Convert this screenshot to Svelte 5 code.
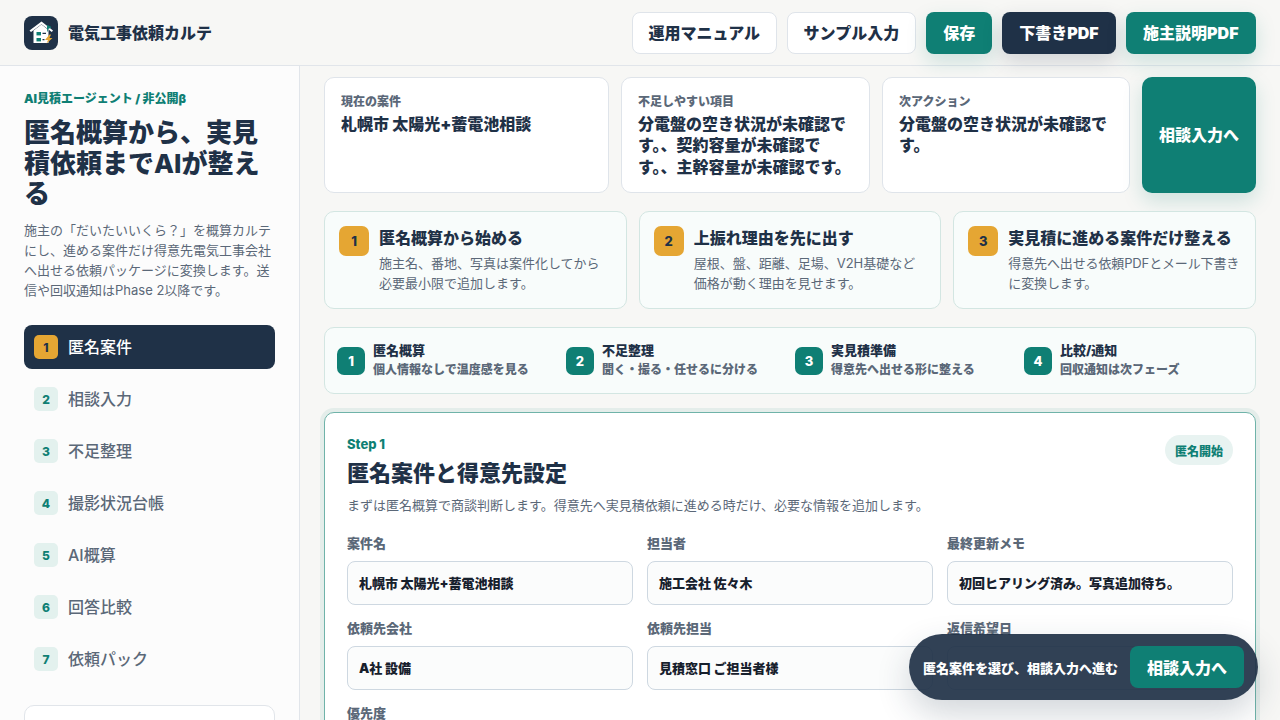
<script>
	const actions = [
		{ label: '運用マニュアル', kind: 'ghost' },
		{ label: 'サンプル入力', kind: 'ghost' },
		{ label: '保存', kind: 'teal' },
		{ label: '下書きPDF', kind: 'navy' },
		{ label: '施主説明PDF', kind: 'teal' }
	];
	const nav = ['匿名案件', '相談入力', '不足整理', '撮影状況台帳', 'AI概算', '回答比較', '依頼パック'];
	const summary = [
		{ label: '現在の案件', value: '札幌市 太陽光+蓄電池相談' },
		{ label: '不足しやすい項目', value: '分電盤の空き状況が未確認です。、契約容量が未確認です。、主幹容量が未確認です。' },
		{ label: '次アクション', value: '分電盤の空き状況が未確認です。' }
	];
	const guide = [
		{ title: '匿名概算から始める', text: '施主名、番地、写真は案件化してから必要最小限で追加します。' },
		{ title: '上振れ理由を先に出す', text: '屋根、盤、距離、足場、V2H基礎など価格が動く理由を見せます。' },
		{ title: '実見積に進める案件だけ整える', text: '得意先へ出せる依頼PDFとメール下書きに変換します。' }
	];
	const flow = [
		{ title: '匿名概算', text: '個人情報なしで温度感を見る' },
		{ title: '不足整理', text: '聞く・撮る・任せるに分ける' },
		{ title: '実見積準備', text: '得意先へ出せる形に整える' },
		{ title: '比較/通知', text: '回収通知は次フェーズ' }
	];
	const fields = [
		{ label: '案件名', value: '札幌市 太陽光+蓄電池相談' },
		{ label: '担当者', value: '施工会社 佐々木' },
		{ label: '最終更新メモ', value: '初回ヒアリング済み。写真追加待ち。' },
		{ label: '依頼先会社', value: 'A社 設備' },
		{ label: '依頼先担当', value: '見積窓口 ご担当者様' },
		{ label: '返信希望日', value: '' },
		{ label: '優先度', value: '通常' }
	];
</script>

<div class="app">
	<header class="topbar">
		<div class="brand">
			<svg class="logo" viewBox="0 0 34 34" aria-hidden="true">
				<rect width="34" height="34" rx="8" fill="#1f3147" />
				<path d="M17.5 5.5 29 14.6 27.8 16 17.5 8.2 7 16 5.5 14.6Z" fill="#fff" />
				<path d="M9.5 14.5 17.5 8.6 24.5 14V27H9.5Z" fill="#fff" />
				<rect x="12.5" y="16" width="4.5" height="3.4" fill="#0f7f74" />
				<rect x="12.5" y="22" width="4.5" height="3.4" fill="#0f7f74" />
				<path d="M18.5 17.4h3.5M18.5 23.6h2" stroke="#1f3147" stroke-width="1.2" />
				<path d="M23.5 9.5v6M23.5 9.5l3.5 1.7-3.5 1.7Z" fill="#0f7f74" stroke="#0f7f74" stroke-width=".8" />
				<path d="M25.5 18.5 21 24h3l-1.5 3.5 6-5.5h-3l1.5-3.5Z" fill="#e5a633" />
			</svg>
			<span class="brand-name">電気工事依頼カルテ</span>
		</div>
		<div class="actions">
			{#each actions as a}
				<button class="btn {a.kind}">{a.label}</button>
			{/each}
		</div>
	</header>

	<div class="body">
		<aside class="sidebar">
			<p class="eyebrow">AI見積エージェント / 非公開β</p>
			<h1>匿名概算から、実見積依頼までAIが整える</h1>
			<p class="lead">施主の「だいたいいくら？」を概算カルテにし、進める案件だけ得意先電気工事会社へ出せる依頼パッケージに変換します。送信や回収通知はPhase 2以降です。</p>
			<nav class="nav">
				{#each nav as item, i}
					<div class="nav-item" class:active={i === 0}>
						<span class="nav-num">{i + 1}</span>
						<span class="nav-label">{item}</span>
					</div>
				{/each}
			</nav>
			<div class="side-card"></div>
		</aside>

		<main class="main">
			<section class="summary">
				{#each summary as s}
					<div class="summary-card">
						<div class="summary-label">{s.label}</div>
						<div class="summary-value">{s.value}</div>
					</div>
				{/each}
				<button class="summary-next">相談入力へ</button>
			</section>

			<section class="guide">
				{#each guide as g, i}
					<div class="guide-card">
						<span class="guide-num">{i + 1}</span>
						<div>
							<h3>{g.title}</h3>
							<p>{g.text}</p>
						</div>
					</div>
				{/each}
			</section>

			<section class="flow">
				{#each flow as f, i}
					<div class="flow-item">
						<span class="flow-num">{i + 1}</span>
						<div>
							<div class="flow-title">{f.title}</div>
							<div class="flow-text">{f.text}</div>
						</div>
					</div>
				{/each}
			</section>

			<section class="panel">
				<div class="panel-head">
					<div>
						<div class="step">Step 1</div>
						<h2>匿名案件と得意先設定</h2>
						<p class="panel-desc">まずは匿名概算で商談判断します。得意先へ実見積依頼に進める時だけ、必要な情報を追加します。</p>
					</div>
					<span class="pill">匿名開始</span>
				</div>
				<div class="fields">
					{#each fields as f}
						<div class="field">
							<div class="field-label">{f.label}</div>
							<div class="input">{f.value}</div>
						</div>
					{/each}
				</div>
			</section>
		</main>
	</div>

	<div class="floatbar">
		<span>匿名案件を選び、相談入力へ進む</span>
		<button>相談入力へ</button>
	</div>
</div>

<style>
	:global(body) {
		margin: 0;
		font-family: Inter, "Noto Sans CJK JP", sans-serif;
		color: #1f3147;
		background: #f7f7f5;
	}
	.app {
		height: 720px;
		overflow: hidden;
		position: relative;
	}
	p, h1, h2, h3 { margin: 0; }
	button { font-family: inherit; }

	/* header */
	.topbar {
		height: 66px;
		box-sizing: border-box;
		border-bottom: 1px solid #e1e5ea;
		padding: 0 24px;
		display: flex;
		align-items: center;
		justify-content: space-between;
		background: #f7f7f5;
	}
	.brand { display: flex; align-items: center; gap: 10px; }
	.logo { width: 34px; height: 34px; display: block; }
	.brand-name { font-size: 16px; font-weight: 900; padding-bottom: 2px; }
	.actions { display: flex; gap: 10px; }
	.btn {
		height: 42px;
		padding: 0 16px 2px;
		border-radius: 8px;
		border: 1px solid transparent;
		font-size: 16px;
		font-weight: 900;
		white-space: nowrap;
	}
	.btn:first-child { padding: 0 15.5px 2px; }
	.btn:last-child { padding: 0 16.5px 2px; }
	.btn.ghost { background: #fff; border-color: #dfe4ea; color: #1f3147; }
	.btn.teal { background: #0f7f74; color: #fff; box-shadow: 0 8px 20px rgba(15, 127, 116, 0.18); }
	.btn.navy { background: #1f3147; color: #fff; box-shadow: 0 8px 20px rgba(31, 49, 71, 0.18); }

	.body { display: flex; height: 654px; }

	/* sidebar */
	.sidebar {
		width: 300px;
		flex: none;
		box-sizing: border-box;
		padding: 24px 24px 0;
		background: #fcfcfc;
		border-right: 1px solid #e1e5ea;
		overflow: hidden;
	}
	.eyebrow { font-size: 12px; font-weight: 900; color: #0f7f74; line-height: 18px; }
	h1 { font-size: 26px; font-weight: 800; line-height: 30.6px; margin-top: 10px; }
	.lead { font-size: 13px; line-height: 20.15px; color: #5b6878; margin-top: 10px; }
	.nav { margin-top: 25px; display: flex; flex-direction: column; gap: 8px; }
	.nav-item {
		height: 44px;
		box-sizing: border-box;
		padding: 0 10px;
		border-radius: 8px;
		display: flex;
		align-items: center;
		gap: 10px;
		font-size: 16px;
		font-weight: 500;
		color: #5b6878;
	}
	.nav-label { padding-bottom: 2px; }
	.nav-num {
		width: 24px;
		height: 24px;
		border-radius: 5px;
		background: #e3f1ee;
		color: #0f7f74;
		font-size: 12px;
		font-weight: 800;
		display: flex;
		align-items: center;
		justify-content: center;
	}
	.nav-item.active { background: #1f3147; color: #fff; }
	.nav-item.active .nav-num { background: #e5a633; color: #1f3147; }
	.side-card {
		margin-top: 24px;
		height: 80px;
		border: 1px solid #e1e5ea;
		border-radius: 10px;
		background: #fff;
	}

	/* main */
	.main {
		flex: 1;
		min-width: 0;
		box-sizing: border-box;
		padding: 11px 24px 0;
		overflow: hidden;
	}
	.summary {
		display: grid;
		grid-template-columns: 285px 249px 248px 114px;
		grid-template-rows: 116px;
		gap: 12px;
	}
	.summary-card {
		box-sizing: border-box;
		background: #fff;
		border: 1px solid #dfe4ea;
		border-radius: 10px;
		padding: 15px 16px 0;
	}
	.summary-label { font-size: 12px; font-weight: 900; color: #5b6878; line-height: 18px; }
	.summary-value { font-size: 16px; font-weight: 900; line-height: 21.4px; margin-top: 3px; }
	.summary-next {
		border: none;
		border-radius: 10px;
		background: #0f7f74;
		color: #fff;
		font-size: 16px;
		font-weight: 900;
		padding: 0 0 2px;
		box-shadow: 0 8px 20px rgba(15, 127, 116, 0.18);
	}

	.guide {
		margin-top: 18px;
		display: grid;
		grid-template-columns: repeat(3, 1fr);
		gap: 12px;
	}
	.guide-card {
		height: 98px;
		box-sizing: border-box;
		background: #f8fcfb;
		border: 1px solid #d3e6e2;
		border-radius: 10px;
		padding: 14px 14px 0;
		display: flex;
		gap: 10px;
	}
	.guide-num {
		flex: none;
		width: 30px;
		height: 30px;
		border-radius: 7px;
		background: #e5a633;
		color: #1f3147;
		font-size: 13px;
		font-weight: 800;
		display: flex;
		align-items: center;
		justify-content: center;
	}
	.guide-card h3 { font-size: 16px; font-weight: 800; line-height: 24px; }
	.guide-card p { font-size: 13px; line-height: 20px; color: #5b6878; margin-top: 3px; }
	.guide-card:last-child p { letter-spacing: -0.01em; }

	.flow {
		margin-top: 18px;
		height: 67px;
		box-sizing: border-box;
		background: #f8fcfb;
		border: 1px solid #d3e6e2;
		border-radius: 10px;
		padding: 0 12px;
		display: grid;
		grid-template-columns: repeat(4, 1fr);
		gap: 10px;
		align-items: center;
	}
	.flow-item { display: flex; align-items: center; gap: 8px; }
	.flow-num {
		flex: none;
		width: 28px;
		height: 28px;
		border-radius: 7px;
		background: #0f7f74;
		color: #fff;
		font-size: 13px;
		font-weight: 800;
		display: flex;
		align-items: center;
		justify-content: center;
	}
	.flow-title { font-size: 13px; font-weight: 900; line-height: 19px; }
	.flow-text { font-size: 12px; font-weight: 800; line-height: 20px; color: #5b6878; }

	.panel {
		margin-top: 18px;
		box-sizing: border-box;
		height: 400px;
		background: #fff;
		border: 1px solid #6fb3a9;
		border-radius: 10px;
		box-shadow: 0 0 0 4px rgba(15, 127, 116, 0.08);
		padding: 23px 22px;
	}
	.panel-head { display: flex; justify-content: space-between; align-items: flex-start; }
	.step { font-size: 13px; font-weight: 800; color: #0f7f74; line-height: 16px; }
	h2 { font-size: 22px; font-weight: 900; line-height: 30px; margin-top: 6px; }
	.panel-desc { font-size: 13px; line-height: 20px; color: #5b6878; margin-top: 7px; }
	.pill {
		height: 30px;
		margin-top: -1px;
		padding: 0 10px;
		border-radius: 15px;
		background: #e8f3f1;
		color: #0f7f74;
		font-size: 12px;
		font-weight: 900;
		display: flex;
		align-items: center;
	}
	.fields {
		margin-top: 19px;
		display: grid;
		grid-template-columns: repeat(3, 1fr);
		gap: 14px;
	}
	.field-label { font-size: 13px; font-weight: 900; color: #5b6878; line-height: 18px; margin-bottom: 9px; }
	.input {
		height: 44px;
		box-sizing: border-box;
		background: #fbfcfc;
		border: 1px solid #ced8e1;
		border-radius: 8px;
		padding: 0 11px 2px;
		display: flex;
		align-items: center;
		font-size: 13px;
		font-weight: 900;
		color: #17202c;
	}

	/* sticky cta */
	.floatbar {
		position: absolute;
		right: 22px;
		bottom: 20px;
		height: 66px;
		box-sizing: border-box;
		padding: 0 14px;
		border-radius: 33px;
		background: rgba(31, 49, 71, 0.92);
		box-shadow: 0 14px 34px rgba(31, 49, 71, 0.2);
		display: flex;
		align-items: center;
		gap: 12px;
		color: #fff;
		font-size: 13px;
		font-weight: 900;
	}
	.floatbar button {
		height: 42px;
		padding: 0 17px;
		border: none;
		border-radius: 8px;
		background: #0f7f74;
		color: #fff;
		font-size: 16px;
		font-weight: 900;
	}
</style>
